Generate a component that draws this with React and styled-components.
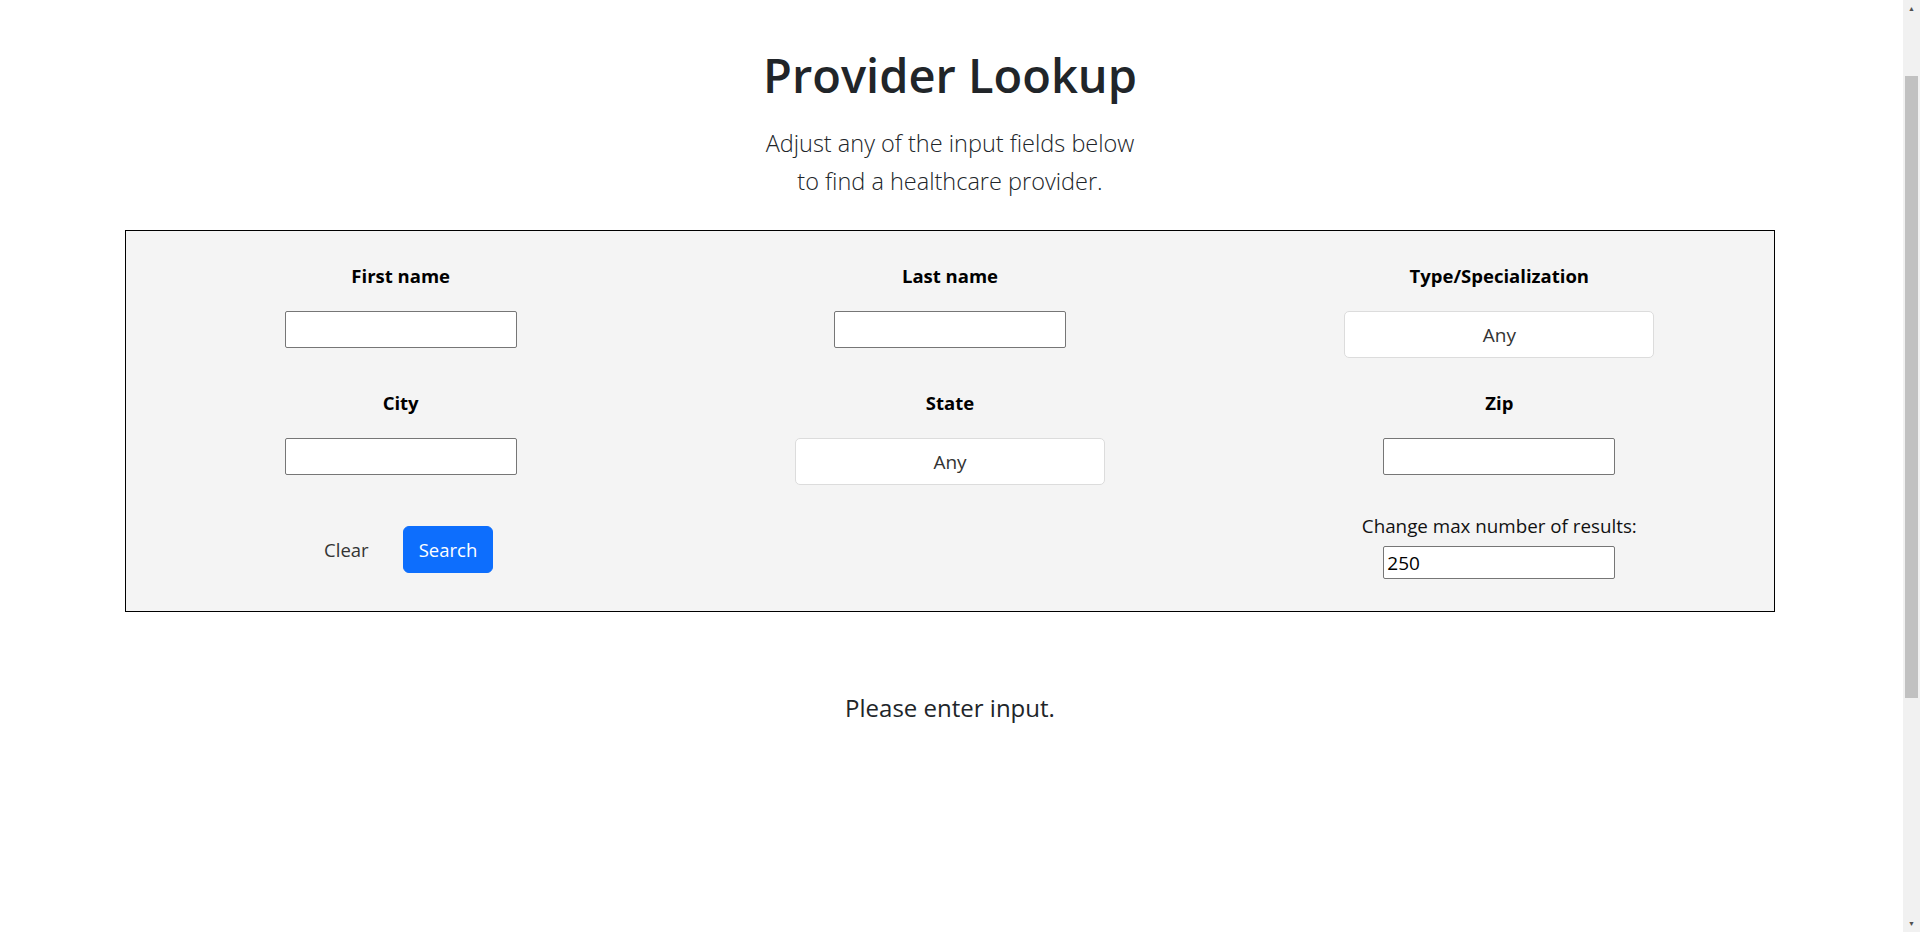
import React, { useState } from 'react';
import styled, { createGlobalStyle } from 'styled-components';

const GlobalStyle = createGlobalStyle`
  body {
    margin: 0;
    background: #fff;
    font-family: 'Open Sans', 'Liberation Sans', sans-serif;
    color: #212529;
  }
  * {
    box-sizing: border-box;
  }
`;

const Page = styled.div`
  padding: 45px 20px 0 0;
  display: flex;
  flex-direction: column;
  align-items: center;
`;

/* window scrollbar as it shows in the screenshot */
const ScrollTrack = styled.div`
  position: fixed;
  top: 0;
  right: 0;
  width: 17px;
  height: 100vh;
  background: #f1f1f1;
  .arrow {
    position: absolute;
    left: 0;
    width: 17px;
    height: 17px;
    display: flex;
    align-items: center;
    justify-content: center;
    font-size: 7px;
    color: #505050;
  }
  .up {
    top: 0;
  }
  .down {
    bottom: 0;
  }
  .thumb {
    position: absolute;
    left: 2px;
    top: 76px;
    width: 13px;
    height: 622px;
    background: #c1c1c1;
  }
`;

const Title = styled.h1`
  margin: 0;
  font-size: 47px;
  line-height: 60px;
  font-weight: 600;
  color: #212529;
`;

const Lead = styled.p`
  margin: 20px 0 0;
  font-size: 23.5px;
  line-height: 37.5px;
  font-weight: 300;
  text-align: center;
  color: #212529;
`;

const Panel = styled.form`
  width: 1650px;
  margin-top: 30px;
  padding: 30px 0 32px;
  background: #f4f4f4;
  border: 1px solid #000;
  display: grid;
  grid-template-columns: repeat(3, 1fr);
  row-gap: 30px;
`;

const Field = styled.div`
  display: flex;
  flex-direction: column;
  align-items: center;
`;

const Label = styled.label`
  font-size: 18.5px;
  line-height: 30px;
  font-weight: 700;
  color: #000;
  margin-bottom: 20px;
`;

const TextInput = styled.input`
  width: 232px;
  height: ${({ small }) => (small ? '33px' : '37px')};
  padding: 0 3px;
  background: #fff;
  border: 1px solid #767676;
  border-radius: 2px;
  font-family: inherit;
  font-size: 19px;
  color: #000;
  outline: none;
`;

const Select = styled.select`
  width: 310px;
  height: 47px;
  background: #fff;
  border: 1px solid #dcdcdc;
  border-radius: 5px;
  appearance: none;
  font-family: inherit;
  font-size: 19px;
  color: #333;
  text-align: center;
  text-align-last: center;
  outline: none;
`;

const Actions = styled.div`
  display: flex;
  justify-content: center;
  align-items: center;
  gap: 18px;
  margin-top: 11px;
`;

const Button = styled.button`
  height: 47px;
  padding: 0 15px;
  border: 1px solid ${({ primary }) => (primary ? '#0d6efd' : 'transparent')};
  border-radius: 6px;
  background: ${({ primary }) => (primary ? '#0d6efd' : 'transparent')};
  color: ${({ primary }) => (primary ? '#fff' : '#333')};
  font-family: inherit;
  font-size: 18.5px;
  cursor: pointer;
`;

const MaxLabel = styled.label`
  font-size: 18.8px;
  line-height: 22px;
  color: #111;
  margin-bottom: 9px;
`;

const Message = styled.h5`
  margin: 81px 0 0;
  font-size: 24px;
  line-height: 30px;
  font-weight: 500;
  color: #212529;
`;

const emptyForm = {
  firstName: '',
  lastName: '',
  type: 'Any',
  city: '',
  state: 'Any',
  zip: '',
  max: '250',
};

const App = () => {
  const [form, setForm] = useState(emptyForm);

  const update = (key) => (e) => setForm({ ...form, [key]: e.target.value });

  return (
    <Page>
      <GlobalStyle />
      <Title>Provider Lookup</Title>
      <Lead>
        Adjust any of the input fields below
        <br />
        to find a healthcare provider.
      </Lead>
      <Panel onSubmit={(e) => e.preventDefault()}>
        <Field>
          <Label>First name</Label>
          <TextInput value={form.firstName} onChange={update('firstName')} />
        </Field>
        <Field>
          <Label>Last name</Label>
          <TextInput value={form.lastName} onChange={update('lastName')} />
        </Field>
        <Field>
          <Label>Type/Specialization</Label>
          <Select value={form.type} onChange={update('type')}>
            <option>Any</option>
          </Select>
        </Field>
        <Field>
          <Label>City</Label>
          <TextInput value={form.city} onChange={update('city')} />
        </Field>
        <Field>
          <Label>State</Label>
          <Select value={form.state} onChange={update('state')}>
            <option>Any</option>
          </Select>
        </Field>
        <Field>
          <Label>Zip</Label>
          <TextInput value={form.zip} onChange={update('zip')} />
        </Field>
        <Field>
          <Actions>
            <Button type="button" onClick={() => setForm(emptyForm)}>
              Clear
            </Button>
            <Button primary type="submit">
              Search
            </Button>
          </Actions>
        </Field>
        <div />
        <Field>
          <MaxLabel>Change max number of results:</MaxLabel>
          <TextInput small value={form.max} onChange={update('max')} />
        </Field>
      </Panel>
      <Message>Please enter input.</Message>
      <ScrollTrack>
        <span className="arrow up">▲</span>
        <div className="thumb" />
        <span className="arrow down">▼</span>
      </ScrollTrack>
    </Page>
  );
};

export default App;
